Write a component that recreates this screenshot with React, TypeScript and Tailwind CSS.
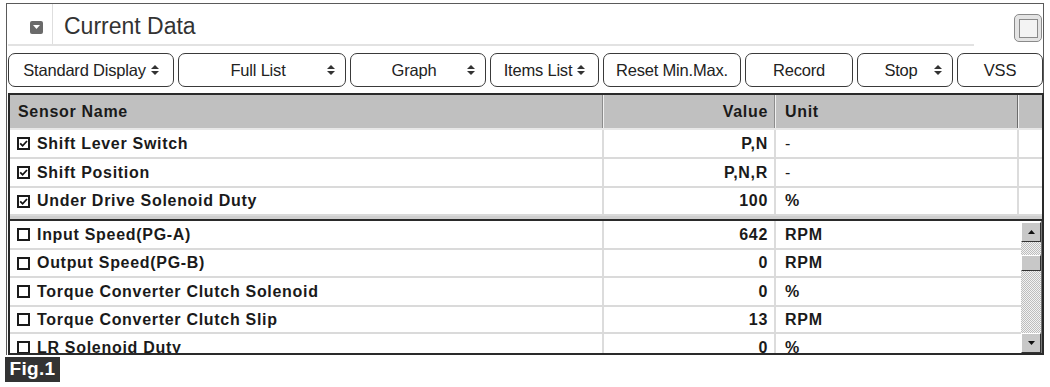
import React from 'react';

type Row = { name: string; value: string; unit: string };

const frozen: Row[] = [
  { name: 'Shift Lever Switch', value: 'P,N', unit: '-' },
  { name: 'Shift Position', value: 'P,N,R', unit: '-' },
  { name: 'Under Drive Solenoid Duty', value: '100', unit: '%' },
];

const items: Row[] = [
  { name: 'Input Speed(PG-A)', value: '642', unit: 'RPM' },
  { name: 'Output Speed(PG-B)', value: '0', unit: 'RPM' },
  { name: 'Torque Converter Clutch Solenoid', value: '0', unit: '%' },
  { name: 'Torque Converter Clutch Slip', value: '13', unit: 'RPM' },
  { name: 'LR Solenoid Duty', value: '0', unit: '%' },
];

const frozenHeights = ['h-[29px]', 'h-[29px]', 'h-[28px]'];
const itemHeights = ['h-[29px]', 'h-[28px]', 'h-[29px]', 'h-[27px]', 'h-[29px]'];

const Arrows = () => (
  <svg width="8" height="12" viewBox="0 0 8 12" className="shrink-0">
    <path d="M0 5 L4 1 L8 5 Z" fill="#333" />
    <path d="M0 7 L4 11 L8 7 Z" fill="#333" />
  </svg>
);

const Check = ({ on }: { on: boolean }) => (
  <svg width="13" height="13" viewBox="0 0 13 13" className="shrink-0 block">
    <rect x="1" y="1" width="11" height="11" fill="#fff" stroke="#1a1a1a" strokeWidth="2" />
    {on && <path d="M3.2 6.4 L5.6 8.8 L10 4" stroke="#111" strokeWidth="1.8" fill="none" />}
  </svg>
);

const buttons = [
  { label: 'Standard Display', w: 'w-[166px]', arrows: true, tight: true },
  { label: 'Full List', w: 'w-[168px]', arrows: true },
  { label: 'Graph', w: 'w-[136px]', arrows: true },
  { label: 'Items List', w: 'w-[109px]', arrows: true, tight: true },
  { label: 'Reset Min.Max.', w: 'w-[138px]' },
  { label: 'Record', w: 'w-[108px]' },
  { label: 'Stop', w: 'w-[96px]', arrows: true },
  { label: 'VSS', w: 'w-[86px]' },
];

const DataRow = ({ row, h, checked, scroll }: { row: Row; h: string; checked: boolean; scroll?: boolean }) => (
  <div className={`flex ${h} border-b-2 border-[#dadada] bg-white text-[16px] font-bold tracking-[0.7px] text-[#1a1a1a]`}>
    <div className="w-[594px] flex items-center gap-[7px] pl-[7px] border-r-2 border-[#dcdcdc]">
      <Check on={checked} />
      <span className="whitespace-nowrap">{row.name}</span>
    </div>
    <div className="w-[172px] flex items-center justify-end pr-[6px] border-r-2 border-[#dcdcdc]">{row.value}</div>
    <div className={`${scroll ? 'w-[245px]' : 'w-[243px] border-r-2 border-[#dcdcdc]'} flex items-center pl-[9px] ${row.unit === '-' ? 'font-normal' : ''}`}>
      {row.unit}
    </div>
  </div>
);

const SbButton = ({ up }: { up: boolean }) => (
  <div className="h-[20px] bg-[#c8c8c8] border border-t-white border-l-white border-b-[#333] border-r-[#333] flex items-center justify-center">
    <svg width="7" height="4" viewBox="0 0 7 4">
      <path d={up ? 'M0 4 L3.5 0 L7 4 Z' : 'M0 0 L3.5 4 L7 0 Z'} fill="#111" />
    </svg>
  </div>
);

export default function App() {
  return (
    <div className="w-[1050px] h-[387px] bg-white overflow-hidden font-['Liberation_Sans',Arial,sans-serif]">
      <div className="ml-[6px] mt-[3px] w-[1038px] border-l border-t border-r border-[#5a5a5a]">
        {/* title */}
        <div className="flex items-center h-[40px]">
          <div className="w-[46px] h-full flex items-center justify-end pr-[9px] pt-[6px] border-r border-[#dedede]">
            <div className="w-[13px] h-[13px] bg-[#6a6a6a] rounded-[2px] flex items-center justify-center">
              <svg width="7" height="4" viewBox="0 0 7 4">
                <path d="M0 0 L3.5 4 L7 0 Z" fill="#fff" />
              </svg>
            </div>
          </div>
          <div className="flex-1 pl-[11px] pt-[5px] text-[23px] text-[#333] leading-none">Current Data</div>
          <div className="w-[28px] h-[28px] mr-[1px] mt-[8px] rounded-[5px] border border-[#8a8a8a] bg-[#e4e4e4] flex items-center justify-center">
            <div className="w-[19px] h-[19px] border border-[#8a8a8a] bg-[#f3f3f3]" />
          </div>
        </div>
        <div className="h-[2px] w-[966px] ml-[1px] bg-[#e2e2e2]" />

        {/* toolbar */}
        <div className="flex gap-[4px] ml-[1px] mt-[7px] h-[34px]">
          {buttons.map((b) => (
            <div
              key={b.label}
              className={`${b.w} h-full rounded-[7px] border-[1.5px] border-[#3a3a3a] bg-white flex items-center ${b.tight ? 'justify-center gap-[5px] px-[5px]' : 'px-[10px]'} text-[16.5px] text-[#222] tracking-[-0.2px]`}
            >
              {b.tight ? (
                <>
                  <span className="whitespace-nowrap">{b.label}</span>
                  <Arrows />
                </>
              ) : (
                <>
                  <span className="flex-1 text-center whitespace-nowrap">{b.label}</span>
                  {b.arrows && <Arrows />}
                </>
              )}
            </div>
          ))}
        </div>

        {/* table */}
        <div className="mt-[6px] ml-[1px] w-[1036px] border-2 border-[#2a2a2a]">
          <div className="flex h-[35px] bg-[#c0c0c0] text-[16px] font-bold tracking-[0.7px] text-[#1a1a1a] border-b-2 border-[#e8e8e8]">
            <div className="w-[594px] flex items-center pl-[8px] border-r border-[#f0f0f0] shadow-[inset_-1px_0_0_#8c8c8c]">Sensor Name</div>
            <div className="w-[172px] flex items-center justify-end pr-[7px] border-r border-[#f0f0f0] shadow-[inset_-1px_0_0_#8c8c8c]">Value</div>
            <div className="w-[243px] flex items-center pl-[9px] border-r border-[#f0f0f0] shadow-[inset_-1px_0_0_#6c6c6c]">Unit</div>
            <div className="flex-1" />
          </div>
          {frozen.map((r, i) => (
            <DataRow key={r.name} row={r} h={frozenHeights[i]} checked />
          ))}
          <div className="h-[3px] bg-[#cfcfcf]" />
          <div className="h-[2px] bg-[#2a2a2a]" />
          <div className="flex h-[132px] overflow-hidden">
            <div className="w-[1011px] overflow-hidden">
              {items.map((r, i) => (
                <DataRow key={r.name} row={r} h={itemHeights[i]} checked={false} scroll />
              ))}
            </div>
            <div className="flex-1 flex flex-col pt-[1px] border-r border-[#777]">
              <SbButton up />
              <div className="flex-1 flex flex-col bg-[repeating-conic-gradient(#bdbdbd_0_25%,#f2f2f2_0_50%)] bg-[length:2px_2px]">
                <div className="h-[13px]" />
                <div className="h-[16px] bg-[#c8c8c8] border border-t-white border-l-white border-b-[#333] border-r-[#333]" />
              </div>
              <SbButton up={false} />
            </div>
          </div>
        </div>
      </div>

      <div className="ml-[5px] mt-[2px] w-[55px] h-[25px] bg-[#333] flex items-center justify-center text-white font-bold text-[19px] tracking-[0.3px]">
        Fig.1
      </div>
    </div>
  );
}
